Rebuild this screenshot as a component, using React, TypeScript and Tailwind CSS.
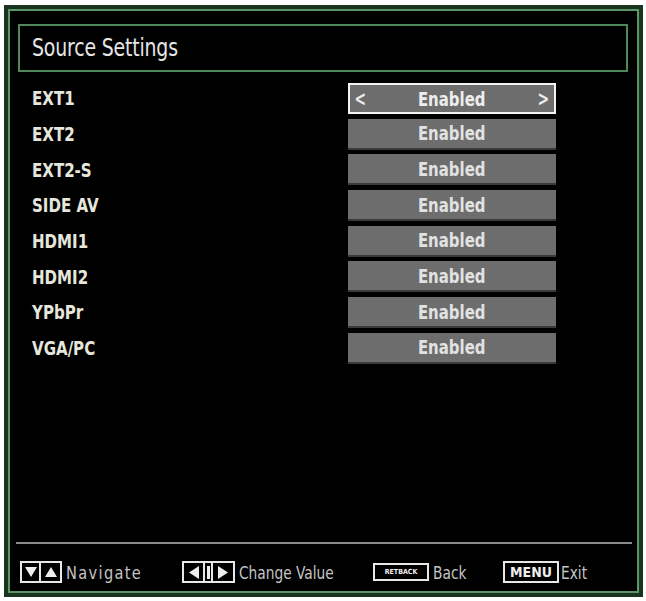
import React from 'react';

const sources = ['EXT1', 'EXT2', 'EXT2-S', 'SIDE AV', 'HDMI1', 'HDMI2', 'YPbPr', 'VGA/PC'];

const font = { fontFamily: '"DejaVu Sans Condensed", "Liberation Sans", sans-serif' };

const TriDown = () => (
  <svg width="12" height="10" viewBox="0 0 12 10"><polygon points="0,0 12,0 6,10" fill="#eee" /></svg>
);
const TriUp = () => (
  <svg width="12" height="10" viewBox="0 0 12 10"><polygon points="0,10 12,10 6,0" fill="#eee" /></svg>
);
const TriLeft = () => (
  <svg width="10" height="13" viewBox="0 0 10 13"><polygon points="10,0 10,13 0,6.5" fill="#eee" /></svg>
);
const TriRight = () => (
  <svg width="10" height="13" viewBox="0 0 10 13"><polygon points="0,0 0,13 10,6.5" fill="#eee" /></svg>
);

const App: React.FC = () => {
  return (
    <div className="w-[646px] h-[601px] bg-white pt-[5px] pl-[4px]" style={font}>
      <div className="w-[639px] h-[592px] bg-black border-[4px] border-[#1b3420] shadow-[inset_0_0_0_2px_#5c9667] flex flex-col pt-[15px] pl-[10px]">
        {/* title */}
        <div className="w-[610px] h-[48px] border-2 border-[#52875b] flex items-center pl-[12px]">
          <span className="inline-block origin-left scale-x-[0.84] text-[25px] text-[#e6e6e6] tracking-[-0.2px]">Source Settings</span>
        </div>

        {/* source list */}
        <div className="mt-[11px] flex flex-col">
          {sources.map((s, i) => (
            <div key={s} className="h-[35.7px] flex items-start">
              <div className="w-[330px] pl-[14px] h-[31px] flex items-center text-[#e6e6dc]">
                <span className="inline-block origin-left scale-x-[0.88] text-[19px] font-bold">{s}</span>
              </div>
              {i === 0 ? (
                <div className="w-[208px] h-[31px] bg-[#6d6d6d] border-2 border-[#f2f2f2] flex items-center justify-between px-[2px] text-[#ededed]">
                  <span className="inline-block scale-x-[0.7] text-[22px] font-bold">&lt;</span>
                  <span className="inline-block scale-x-[0.83] text-[20px] font-bold">Enabled</span>
                  <span className="inline-block scale-x-[0.7] text-[22px] font-bold">&gt;</span>
                </div>
              ) : (
                <div className="w-[208px] h-[31px] bg-[#6d6d6d] border-b-2 border-[#3a3a3a] flex items-center justify-center text-[#e2e2e2]">
                  <span className="inline-block scale-x-[0.83] text-[20px] font-bold">Enabled</span>
                </div>
              )}
            </div>
          ))}
        </div>

        <div className="flex-1" />

        {/* separator */}
        <div className="w-[616px] h-[2px] bg-[#8a8a8a] ml-[-2px]" />

        {/* footer */}
        <div className="h-[49px] pt-[17px] flex items-start pl-[2px] text-[#c4c4c4]">
          <div className="flex border-2 border-[#e8e8e8] h-[22px]">
            <div className="w-[19px] flex items-center justify-center border-r-2 border-[#e8e8e8]"><TriDown /></div>
            <div className="w-[19px] flex items-center justify-center"><TriUp /></div>
          </div>
          <span className="ml-[4px] w-[116px] h-[22px] flex items-center">
            <span className="inline-block origin-left scale-x-[0.9] text-[18px] tracking-[1.5px]">Navigate</span>
          </span>

          <div className="flex border-2 border-[#e8e8e8] h-[22px]">
            <div className="w-[21px] flex items-center justify-center border-r-2 border-[#e8e8e8]"><TriLeft /></div>
            <div className="w-[8px] flex items-center justify-center border-r-2 border-[#e8e8e8]">
              <div className="w-[3px] h-[13px] bg-[#eee]" />
            </div>
            <div className="w-[20px] flex items-center justify-center"><TriRight /></div>
          </div>
          <span className="ml-[4px] w-[134px] h-[22px] flex items-center">
            <span className="inline-block origin-left scale-x-[0.85] text-[18px]">Change Value</span>
          </span>

          <div className="mt-[2px] w-[56px] h-[18px] border-2 border-[#e8e8e8] flex items-center justify-center">
            <span className="text-[7px] font-bold text-[#eee] leading-none">RETBACK</span>
          </div>
          <span className="ml-[4px] w-[70px] h-[22px] flex items-center">
            <span className="inline-block origin-left scale-x-[0.85] text-[18px]">Back</span>
          </span>

          <div className="w-[56px] h-[22px] border-2 border-[#e8e8e8] flex items-center justify-center">
            <span className="text-[14px] font-bold text-[#eee] leading-none">MENU</span>
          </div>
          <span className="ml-[2px] h-[22px] flex items-center">
            <span className="inline-block origin-left scale-x-[0.85] text-[18px]">Exit</span>
          </span>
        </div>
      </div>
    </div>
  );
};

export default App;
